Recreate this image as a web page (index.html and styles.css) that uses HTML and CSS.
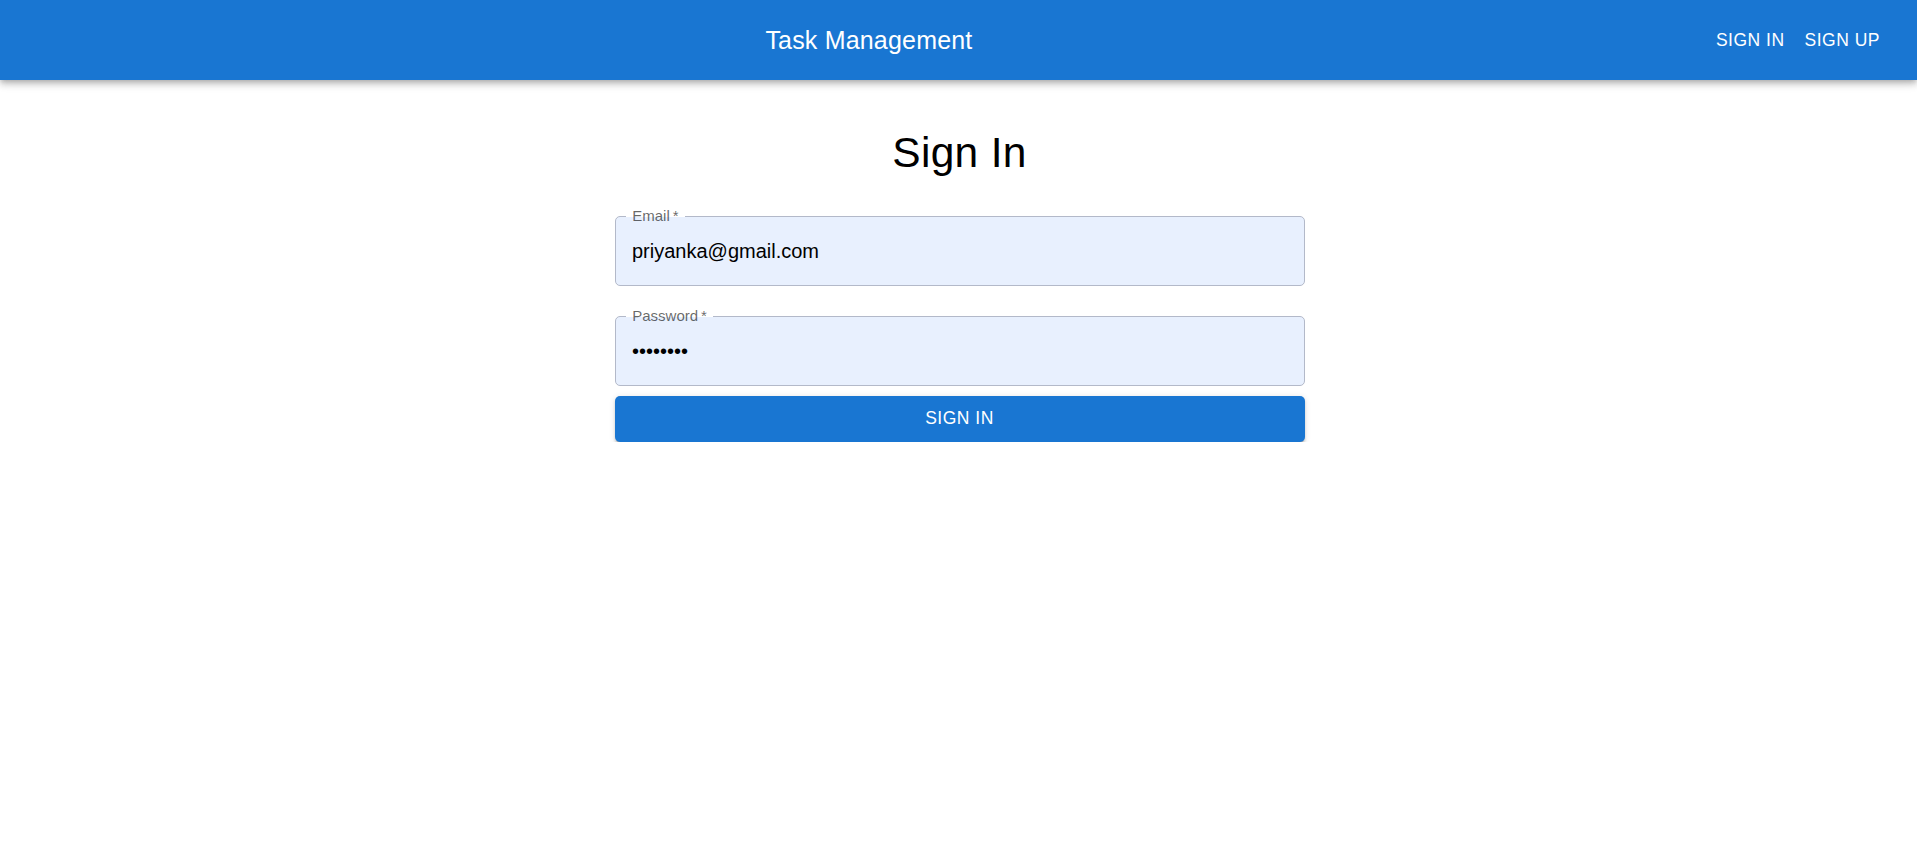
FILE: index.html
```html
<!DOCTYPE html>
<html lang="en">
<head>
<meta charset="utf-8">
<title>Task Management</title>
<link rel="stylesheet" href="styles.css">
</head>
<body>
<header class="appbar">
  <div class="toolbar">
    <div class="brand">Task Management</div>
    <nav class="nav">
      <a class="nav-btn" href="#">Sign In</a>
      <a class="nav-btn" href="#">Sign Up</a>
    </nav>
  </div>
</header>
<main class="container">
  <h1 class="title">Sign In</h1>
  <form class="form">
    <div class="field field-first">
      <label class="field-label">Email&thinsp;*</label>
      <input class="field-input" type="text" value="priyanka@gmail.com">
    </div>
    <div class="field">
      <label class="field-label">Password&thinsp;*</label>
      <input class="field-input" type="password" value="password">
    </div>
    <button class="submit" type="button">Sign In</button>
  </form>
</main>
</body>
</html>
```

FILE: styles.css
```css
* { box-sizing: border-box; }
html, body { margin: 0; padding: 0; background: #fff; }
body {
  font-family: "Liberation Sans", Arial, sans-serif;
  color: rgba(0,0,0,0.87);
}
.appbar {
  background: #1976d2;
  color: #fff;
  box-shadow: 0 2.5px 5px -1.25px rgba(0,0,0,0.2), 0 5px 6px 0 rgba(0,0,0,0.14), 0 1.25px 12.5px 0 rgba(0,0,0,0.12);
  position: relative;
  z-index: 2;
}
.toolbar {
  height: 80px;
  display: flex;
  align-items: center;
  padding: 0 27px 0 32px;
}
.brand {
  flex: 1;
  text-align: center;
  font-size: 25px;
  line-height: 1.6;
  letter-spacing: 0.0075em;
}
.nav { display: flex; }
.nav-btn {
  color: #fff;
  text-decoration: none;
  text-transform: uppercase;
  font-size: 17.5px;
  line-height: 1.75;
  letter-spacing: 0.02857em;
  padding: 7.5px 10px;
  border-radius: 5px;
}
.container {
  width: 750px;
  margin: 0 auto;
  padding: 47px 29px 0 31px;
}
.title {
  margin: 0;
  text-align: center;
  font-weight: 400;
  font-size: 42.5px;
  line-height: 1.235;
  letter-spacing: 0.00735em;
  color: #000;
}
.form {
  margin-top: 16.5px;
  display: flex;
  flex-direction: column;
}
.field {
  position: relative;
  height: 70px;
  margin: 20px 0 10px;
  border: 1px solid #b3b9c9;
  border-radius: 5px;
  background: #e8f0fe;
}
.field-label {
  position: absolute;
  left: 10.5px;
  top: -10px;
  padding: 0 6.25px;
  font-size: 15px;
  line-height: 18px;
  color: rgba(0,0,0,0.6);
  background: linear-gradient(to bottom, #fff 0, #fff 10px, #e8f0fe 10px, #e8f0fe 100%);
}
.field-input {
  display: block;
  width: 100%;
  height: 100%;
  border: 0;
  outline: none;
  background: transparent;
  padding: 2px 16.5px 0;
  font-family: "Liberation Sans", Arial, sans-serif;
  font-size: 20px;
  color: #000;
}
.submit {
  height: 46px;
  border: 0;
  border-radius: 5px;
  background: #1976d2;
  color: #fff;
  font-family: "Liberation Sans", Arial, sans-serif;
  font-size: 17.5px;
  letter-spacing: 0.02857em;
  text-transform: uppercase;
  box-shadow: 0 3.75px 1.25px -2.5px rgba(0,0,0,0.2), 0 2.5px 2.5px 0 rgba(0,0,0,0.14), 0 1.25px 6.25px 0 rgba(0,0,0,0.12);
  cursor: pointer;
}
```
